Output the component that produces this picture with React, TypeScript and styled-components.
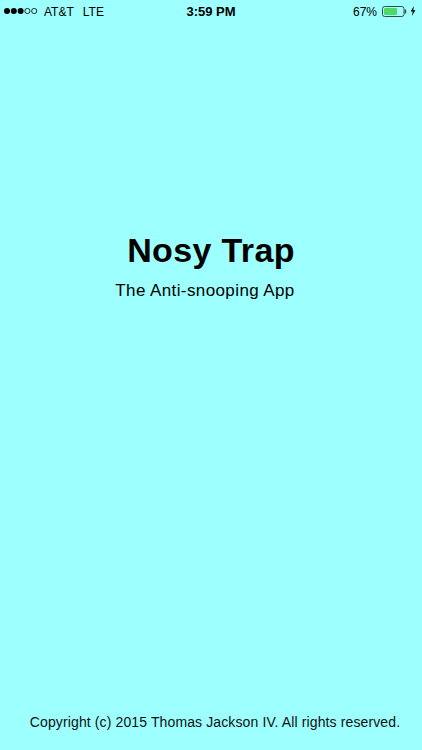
import React from "react";
import styled, { createGlobalStyle } from "styled-components";

const Global = createGlobalStyle`
  html, body { margin: 0; padding: 0; background: #9dfffe; }
  body { font-family: "Liberation Sans", Arial, Helvetica, sans-serif; color: #000; }
`;

const Screen = styled.div`
  width: 422px;
  height: 750px;
  background: #9dfffe;
  display: flex;
  flex-direction: column;
  overflow: hidden;
`;

const StatusBar = styled.div`
  height: 24px;
  display: grid;
  grid-template-columns: 1fr auto 1fr;
  align-items: center;
  font-size: 12px;
  line-height: 24px;
  color: #000;
`;

const Left = styled.div`
  display: flex;
  align-items: center;
  padding-left: 4px;
`;

const Carrier = styled.span<{ $gap?: number }>`
  margin-left: ${(p) => p.$gap ?? 0}px;
  font-size: 12px;
`;

const Time = styled.div`
  font-weight: bold;
  font-size: 13px;
`;

const Right = styled.div`
  display: flex;
  align-items: center;
  justify-content: flex-end;
  padding-right: 6px;
`;

const Percent = styled.span`
  margin-right: 5px;
`;

const Icon = styled.svg<{ $ml?: number }>`
  display: block;
  margin-left: ${(p) => p.$ml ?? 0}px;
  margin-top: -2px;
`;

const Main = styled.main`
  padding-top: 209px;
  display: flex;
  flex-direction: column;
  align-items: center;
`;

const Title = styled.h1`
  margin: 0;
  font-size: 34px;
  line-height: 34px;
  font-weight: bold;
  letter-spacing: 0.35px;
`;

const Subtitle = styled.p`
  margin: 15px 12px 0 0;
  font-size: 17px;
  line-height: 17px;
  letter-spacing: 0.4px;
`;

const Spacer = styled.div`
  flex: 1;
`;

const Footer = styled.footer`
  padding-bottom: 21px;
  padding-left: 8px;
  text-align: center;
  font-size: 14px;
  line-height: 14px;
  letter-spacing: 0.12px;
  color: #111;
`;

const Signal = () => (
  <Icon width="36" height="8" viewBox="0 0 36 8">
    {[0, 1, 2, 3, 4].map((i) =>
      i < 3 ? (
        <circle key={i} cx={3 + i * 6.8} cy={4} r={3} fill="#000" />
      ) : (
        <circle key={i} cx={3 + i * 6.8} cy={4} r={2.6} fill="none" stroke="#000" strokeWidth={0.8} />
      )
    )}
  </Icon>
);

const Battery = () => (
  <Icon width="25" height="11" viewBox="0 0 25 11">
    <rect x="0.5" y="0.5" width="21.5" height="10" rx="2.2" fill="none" stroke="#3a4a4a" strokeWidth="1" />
    <rect x="2" y="2" width="13" height="7" rx="1" fill="#4cd964" />
    <rect x="22.6" y="3.5" width="1.6" height="4" rx="0.6" fill="#3a4a4a" />
  </Icon>
);

const Bolt = () => (
  <Icon $ml={3} width="6" height="10" viewBox="0 0 6 10">
    <path d="M4 0 L0.6 5.6 H2.8 L1.8 10 L5.4 4.2 H3.2 Z" fill="#000" />
  </Icon>
);

export default function App() {
  return (
    <>
      <Global />
      <Screen>
        <StatusBar>
          <Left>
            <Signal />
            <Carrier $gap={4}>AT&amp;T</Carrier>
            <Carrier $gap={9}>LTE</Carrier>
          </Left>
          <Time>3:59 PM</Time>
          <Right>
            <Percent>67%</Percent>
            <Battery />
            <Bolt />
          </Right>
        </StatusBar>
        <Main>
          <Title>Nosy Trap</Title>
          <Subtitle>The Anti-snooping App</Subtitle>
        </Main>
        <Spacer />
        <Footer>Copyright (c) 2015 Thomas Jackson IV. All rights reserved.</Footer>
      </Screen>
    </>
  );
}
